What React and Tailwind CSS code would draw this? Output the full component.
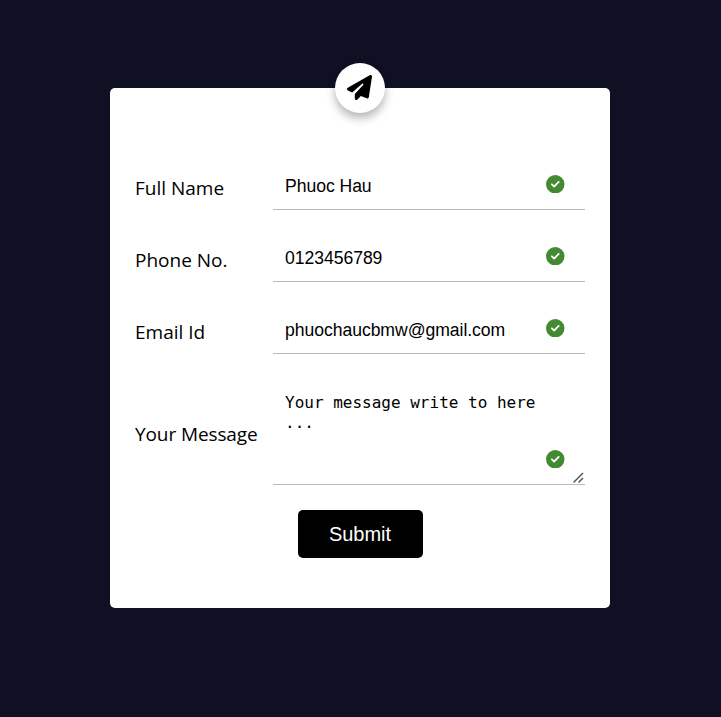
import { FaPaperPlane, FaCircleCheck } from "react-icons/fa6";

const fields = [
  { label: "Full Name", value: "Phuoc Hau" },
  { label: "Phone No.", value: "0123456789" },
  { label: "Email Id", value: "phuochaucbmw@gmail.com" },
];

function Check() {
  return <FaCircleCheck className="absolute right-[20.5px] bottom-4 size-[18.5px] text-[#438a32]" />;
}

export default function App() {
  return (
    <main className="flex h-[717px] w-[721px] items-start bg-[#101025] pt-[88px] pl-[110px] font-['Open_Sans',sans-serif] text-black">
      <form className="relative h-[520px] w-[500px] rounded-[5px] bg-white px-[25px] pt-[74px]">
        <div className="absolute -top-[25px] left-[225px] flex size-[50px] items-center justify-center rounded-full bg-white pr-px pb-px shadow-[0_5px_10px_rgba(0,0,0,0.3)]">
          <FaPaperPlane className="size-[25px]" />
        </div>
        {fields.map((f) => (
          <div key={f.label} className="mb-6 flex h-12 items-center">
            <label className="w-[138px] pt-1 text-[19px] whitespace-nowrap">{f.label}</label>
            <div className="relative h-12 w-[312px] border-b border-[#bbb]">
              <input defaultValue={f.value} className="h-full w-full px-3 pt-0.5 font-['Liberation_Sans',sans-serif] text-[17.6px] tracking-[-0.05px] outline-none" />
              <Check />
            </div>
          </div>
        ))}
        <div className="flex h-[107px] items-center">
          <label className="w-[138px] pt-1.5 text-[19px] tracking-[-0.1px] whitespace-nowrap">Your Message</label>
          <div className="relative h-[107px] w-[312px] border-b border-[#bbb]">
            <textarea defaultValue="Your message write to here ..." className="block h-full w-full resize-none px-3 pt-[15px] font-['DejaVu_Sans_Mono',monospace] text-[16px] leading-5 outline-none" />
            <Check />
            <svg viewBox="0 0 12 12" className="absolute right-0 bottom-0 size-3 stroke-[#555]" strokeWidth="1.5">
              <path d="M0.5 10.5 10 1M5.5 10.5 10 6" />
            </svg>
          </div>
        </div>
        <button type="button" className="mx-auto mt-[25px] block h-12 w-[125px] rounded-[5px] bg-black font-['Liberation_Sans',sans-serif] text-xl text-white">Submit</button>
      </form>
    </main>
  );
}
